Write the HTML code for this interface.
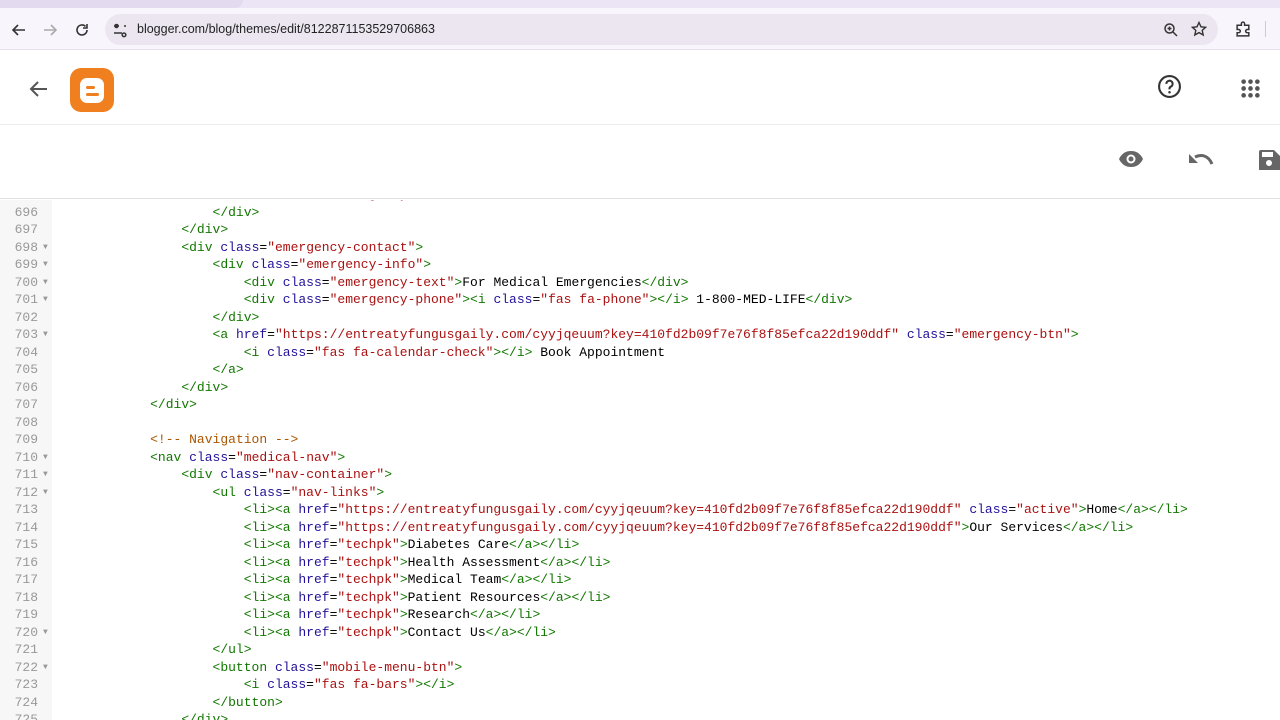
<!DOCTYPE html>
<html><head><meta charset="utf-8"><style>
*{margin:0;padding:0;box-sizing:border-box}
body{width:1280px;height:720px;overflow:hidden;background:#fff;font-family:"Liberation Sans",sans-serif;position:relative}
.tabs{position:absolute;left:0;top:0;width:1280px;height:10px;background:#ece5f5}
.tabs .t{position:absolute;left:0;top:0;width:243px;height:8px;background:#e3daf0;border-radius:0 0 10px 0}
.bar{position:absolute;left:0;top:8px;width:1280px;height:42px;background:#f9f5fc;border-bottom:1px solid #e6e0ea}
.url{position:absolute;left:105px;top:6px;width:1113px;height:31px;background:#ece6f1;border-radius:16px}
.url .txt{position:absolute;left:32px;top:8px;font-size:12.5px;color:#222}
.hdr{position:absolute;left:0;top:50px;width:1280px;height:75px;border-bottom:1px solid #ececec}
.tool{position:absolute;left:0;top:125px;width:1280px;height:74px;border-bottom:1px solid #e0e0e0}
.logo{position:absolute;left:70px;top:68px;width:44px;height:44px;background:#ef7f1f;border-radius:11px}
.logo .b{position:absolute;left:10px;top:10px;width:24px;height:25px;background:#fff;border-radius:7px}
.logo .l1{position:absolute;left:16px;top:18px;width:9px;height:3px;background:#ef7f1f;border-radius:2px}
.logo .l2{position:absolute;left:16px;top:25px;width:13px;height:3px;background:#ef7f1f;border-radius:2px}
.code{position:absolute;left:0;top:200px;width:1280px;height:520px;overflow:hidden}
.gut{position:absolute;left:0;top:0;width:52px;height:520px;background:#f7f7f7}
.lines{position:absolute;left:0;top:-14px;font-family:"Liberation Mono",monospace;font-size:13px;line-height:17.5px;color:#000}
.ln{display:block;white-space:pre;height:17.5px;position:relative}
.ln .n{position:absolute;left:0;width:38px;text-align:right;color:#999}
.ln .f{position:absolute;left:43px;color:#999;font-size:8px}
.ln .c{position:absolute;left:56.5px}
.t{color:#170}.a{color:#219}.s{color:#a11}.m{color:#a50}
</style></head><body>
<div class="tabs"><div class="t"></div></div>
<div class="bar">
<svg style="position:absolute;left:11px;top:14px" width="16" height="16" viewBox="0 0 16 16"><path d="M14 8H2M7 3L2 8l5 5" stroke="#333" stroke-width="1.6" fill="none"/></svg>
<svg style="position:absolute;left:42px;top:14px" width="16" height="16" viewBox="0 0 16 16"><path d="M2 8h12M9 3l5 5-5 5" stroke="#aaa" stroke-width="1.6" fill="none"/></svg>
<svg style="position:absolute;left:74px;top:14px" width="16" height="16" viewBox="0 0 16 16"><path d="M13 8a5 5 0 1 1-1.5-3.6M13 2v4H9" stroke="#333" stroke-width="1.6" fill="none"/></svg>
<div class="url">
<svg style="position:absolute;left:7px;top:8px" width="16" height="16" viewBox="0 0 16 16"><path d="M2 4h5M2 11h8M12 4h2M3 4a1.5 1.5 0 1 1 0 .01M12 11a1.8 1.8 0 1 0 .01 0" stroke="#333" stroke-width="1.5" fill="none"/></svg>
<span class="txt">blogger.com/blog/themes/edit/8122871153529706863</span>
<svg style="position:absolute;left:1058px;top:8px" width="16" height="16" viewBox="0 0 16 16"><circle cx="6.5" cy="6.5" r="4.5" stroke="#333" stroke-width="1.5" fill="none"/><path d="M10 10l4 4M4.5 6.5h4M6.5 4.5v4" stroke="#333" stroke-width="1.5"/></svg>
<svg style="position:absolute;left:1086px;top:7px" width="16" height="16" viewBox="0 0 16 16"><path d="M8 1.5l2 4.3 4.6.5-3.4 3.1 1 4.6L8 11.6 3.8 14l1-4.6L1.4 6.3 6 5.8z" stroke="#333" stroke-width="1.4" fill="none"/></svg>
</div>
<svg style="position:absolute;left:1235px;top:13px" width="17" height="17" viewBox="0 0 16 16"><path d="M2 4h4V2.5a1.5 1.5 0 0 1 3 0V4h4v4h-1.5a1.5 1.5 0 0 0 0 3H13v3H2v-3h1.5a1.5 1.5 0 0 0 0-3H2z" stroke="#333" stroke-width="1.4" fill="none"/></svg>
<div style="position:absolute;left:1265px;top:13px;width:1px;height:16px;background:#ccc"></div>
</div>
<div class="hdr">
<svg style="position:absolute;left:29px;top:29px" width="20" height="20" viewBox="0 0 20 20"><path d="M18 10H3M9 3l-7 7 7 7" stroke="#555" stroke-width="2" fill="none"/></svg>
<svg style="position:absolute;left:1157px;top:24px" width="25" height="25" viewBox="0 0 24 24"><circle cx="12" cy="12" r="10" stroke="#333" stroke-width="2" fill="none"/><path d="M9 9.5a3 3 0 1 1 4.2 2.7c-.8.4-1.2 1-1.2 1.8v.8" stroke="#333" stroke-width="2" fill="none"/><circle cx="12" cy="17.5" r="1.2" fill="#333"/></svg>
<svg style="position:absolute;left:1241px;top:29px" width="19" height="19" viewBox="0 0 18 18" fill="#555"><circle cx="2.5" cy="2.5" r="2.2"/><circle cx="9" cy="2.5" r="2.2"/><circle cx="15.5" cy="2.5" r="2.2"/><circle cx="2.5" cy="9" r="2.2"/><circle cx="9" cy="9" r="2.2"/><circle cx="15.5" cy="9" r="2.2"/><circle cx="2.5" cy="15.5" r="2.2"/><circle cx="9" cy="15.5" r="2.2"/><circle cx="15.5" cy="15.5" r="2.2"/></svg>
</div>
<div class="logo"><div class="b"></div><div class="l1"></div><div class="l2"></div></div>
<div class="tool">
<svg style="position:absolute;left:1118px;top:25px" width="26" height="18" viewBox="0 0 26 18"><path d="M1 9C4 3 8 1 13 1s9 2 12 8c-3 6-7 8-12 8S4 15 1 9z" fill="#666"/><circle cx="13" cy="9" r="4.5" fill="#fff"/><circle cx="13" cy="9" r="2.5" fill="#666"/></svg>
<svg style="position:absolute;left:1188px;top:27px" width="26" height="16" viewBox="0 0 26 16"><path d="M7 5c6-3 13-2 17 7" stroke="#666" stroke-width="3" fill="none"/><path d="M1 2v9h9z" fill="#666"/></svg>
<svg style="position:absolute;left:1259px;top:25px" width="21" height="20" viewBox="0 0 21 20"><path d="M0 2a2 2 0 0 1 2-2h13l6 6v14H0z" fill="#666"/><rect x="3" y="2" width="11" height="5" fill="#fff"/><circle cx="10" cy="13" r="3" fill="#fff"/></svg>
</div>
<div class="code"><div class="gut"></div>
<div class="lines">
<span class="ln"><span class="n">695</span><span class="c">                        <span class="t">&lt;div</span> <span class="a">class</span>=<span class="s">"emergency-sub"</span>&gt;</span></span>
<span class="ln"><span class="n">696</span><span class="c">                    <span class="t">&lt;/div&gt;</span></span></span>
<span class="ln"><span class="n">697</span><span class="c">                <span class="t">&lt;/div&gt;</span></span></span>
<span class="ln"><span class="n">698</span><span class="f">▼</span><span class="c">                <span class="t">&lt;div</span> <span class="a">class</span>=<span class="s">"emergency-contact"</span><span class="t">&gt;</span></span></span>
<span class="ln"><span class="n">699</span><span class="f">▼</span><span class="c">                    <span class="t">&lt;div</span> <span class="a">class</span>=<span class="s">"emergency-info"</span><span class="t">&gt;</span></span></span>
<span class="ln"><span class="n">700</span><span class="f">▼</span><span class="c">                        <span class="t">&lt;div</span> <span class="a">class</span>=<span class="s">"emergency-text"</span><span class="t">&gt;</span>For Medical Emergencies<span class="t">&lt;/div&gt;</span></span></span>
<span class="ln"><span class="n">701</span><span class="f">▼</span><span class="c">                        <span class="t">&lt;div</span> <span class="a">class</span>=<span class="s">"emergency-phone"</span><span class="t">&gt;&lt;i</span> <span class="a">class</span>=<span class="s">"fas fa-phone"</span><span class="t">&gt;&lt;/i&gt;</span> 1-800-MED-LIFE<span class="t">&lt;/div&gt;</span></span></span>
<span class="ln"><span class="n">702</span><span class="c">                    <span class="t">&lt;/div&gt;</span></span></span>
<span class="ln"><span class="n">703</span><span class="f">▼</span><span class="c">                    <span class="t">&lt;a</span> <span class="a">href</span>=<span class="s">"https://entreatyfungusgaily.com/cyyjqeuum?key=410fd2b09f7e76f8f85efca22d190ddf"</span> <span class="a">class</span>=<span class="s">"emergency-btn"</span><span class="t">&gt;</span></span></span>
<span class="ln"><span class="n">704</span><span class="c">                        <span class="t">&lt;i</span> <span class="a">class</span>=<span class="s">"fas fa-calendar-check"</span><span class="t">&gt;&lt;/i&gt;</span> Book Appointment</span></span>
<span class="ln"><span class="n">705</span><span class="c">                    <span class="t">&lt;/a&gt;</span></span></span>
<span class="ln"><span class="n">706</span><span class="c">                <span class="t">&lt;/div&gt;</span></span></span>
<span class="ln"><span class="n">707</span><span class="c">            <span class="t">&lt;/div&gt;</span></span></span>
<span class="ln"><span class="n">708</span><span class="c"> </span></span>
<span class="ln"><span class="n">709</span><span class="c">            <span class="m">&lt;!-- Navigation --&gt;</span></span></span>
<span class="ln"><span class="n">710</span><span class="f">▼</span><span class="c">            <span class="t">&lt;nav</span> <span class="a">class</span>=<span class="s">"medical-nav"</span><span class="t">&gt;</span></span></span>
<span class="ln"><span class="n">711</span><span class="f">▼</span><span class="c">                <span class="t">&lt;div</span> <span class="a">class</span>=<span class="s">"nav-container"</span><span class="t">&gt;</span></span></span>
<span class="ln"><span class="n">712</span><span class="f">▼</span><span class="c">                    <span class="t">&lt;ul</span> <span class="a">class</span>=<span class="s">"nav-links"</span><span class="t">&gt;</span></span></span>
<span class="ln"><span class="n">713</span><span class="c">                        <span class="t">&lt;li&gt;&lt;a</span> <span class="a">href</span>=<span class="s">"https://entreatyfungusgaily.com/cyyjqeuum?key=410fd2b09f7e76f8f85efca22d190ddf"</span> <span class="a">class</span>=<span class="s">"active"</span><span class="t">&gt;</span>Home<span class="t">&lt;/a&gt;&lt;/li&gt;</span></span></span>
<span class="ln"><span class="n">714</span><span class="c">                        <span class="t">&lt;li&gt;&lt;a</span> <span class="a">href</span>=<span class="s">"https://entreatyfungusgaily.com/cyyjqeuum?key=410fd2b09f7e76f8f85efca22d190ddf"</span><span class="t">&gt;</span>Our Services<span class="t">&lt;/a&gt;&lt;/li&gt;</span></span></span>
<span class="ln"><span class="n">715</span><span class="c">                        <span class="t">&lt;li&gt;&lt;a</span> <span class="a">href</span>=<span class="s">"techpk"</span><span class="t">&gt;</span>Diabetes Care<span class="t">&lt;/a&gt;&lt;/li&gt;</span></span></span>
<span class="ln"><span class="n">716</span><span class="c">                        <span class="t">&lt;li&gt;&lt;a</span> <span class="a">href</span>=<span class="s">"techpk"</span><span class="t">&gt;</span>Health Assessment<span class="t">&lt;/a&gt;&lt;/li&gt;</span></span></span>
<span class="ln"><span class="n">717</span><span class="c">                        <span class="t">&lt;li&gt;&lt;a</span> <span class="a">href</span>=<span class="s">"techpk"</span><span class="t">&gt;</span>Medical Team<span class="t">&lt;/a&gt;&lt;/li&gt;</span></span></span>
<span class="ln"><span class="n">718</span><span class="c">                        <span class="t">&lt;li&gt;&lt;a</span> <span class="a">href</span>=<span class="s">"techpk"</span><span class="t">&gt;</span>Patient Resources<span class="t">&lt;/a&gt;&lt;/li&gt;</span></span></span>
<span class="ln"><span class="n">719</span><span class="c">                        <span class="t">&lt;li&gt;&lt;a</span> <span class="a">href</span>=<span class="s">"techpk"</span><span class="t">&gt;</span>Research<span class="t">&lt;/a&gt;&lt;/li&gt;</span></span></span>
<span class="ln"><span class="n">720</span><span class="f">▼</span><span class="c">                        <span class="t">&lt;li&gt;&lt;a</span> <span class="a">href</span>=<span class="s">"techpk"</span><span class="t">&gt;</span>Contact Us<span class="t">&lt;/a&gt;&lt;/li&gt;</span></span></span>
<span class="ln"><span class="n">721</span><span class="c">                    <span class="t">&lt;/ul&gt;</span></span></span>
<span class="ln"><span class="n">722</span><span class="f">▼</span><span class="c">                    <span class="t">&lt;button</span> <span class="a">class</span>=<span class="s">"mobile-menu-btn"</span><span class="t">&gt;</span></span></span>
<span class="ln"><span class="n">723</span><span class="c">                        <span class="t">&lt;i</span> <span class="a">class</span>=<span class="s">"fas fa-bars"</span><span class="t">&gt;&lt;/i&gt;</span></span></span>
<span class="ln"><span class="n">724</span><span class="c">                    <span class="t">&lt;/button&gt;</span></span></span>
<span class="ln"><span class="n">725</span><span class="c">                <span class="t">&lt;/div&gt;</span></span></span>
</div></div>
</body></html>
